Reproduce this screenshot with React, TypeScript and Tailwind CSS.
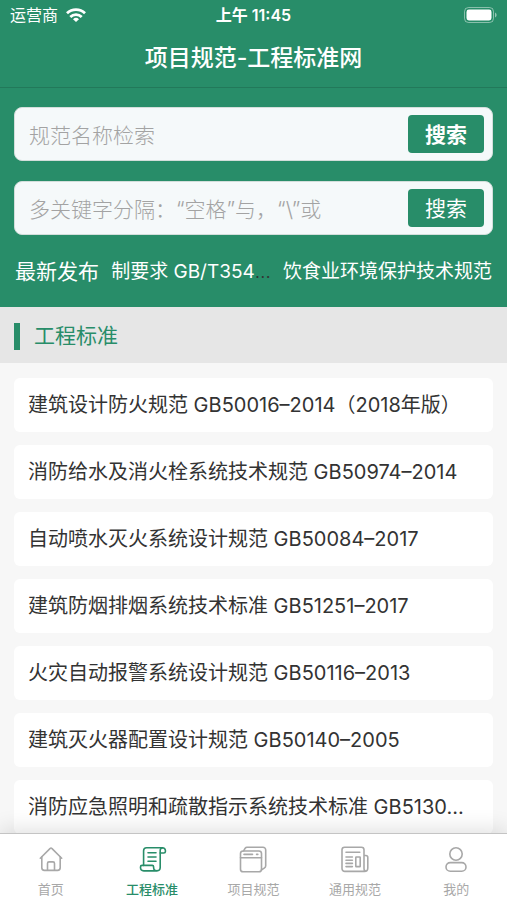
import type { ReactNode } from "react";

const standards = [
  "建筑设计防火规范 GB50016–2014（2018年版）",
  "消防给水及消火栓系统技术规范 GB50974–2014",
  "自动喷水灭火系统设计规范 GB50084–2017",
  "建筑防烟排烟系统技术标准 GB51251–2017",
  "火灾自动报警系统设计规范 GB50116–2013",
  "建筑灭火器配置设计规范 GB50140–2005",
  "消防应急照明和疏散指示系统技术标准 GB5130…",
];

function TabIcon({ children }: { children: ReactNode }) {
  return (
    <svg
      viewBox="0 0 30 30"
      className="size-[30px]"
      fill="none"
      stroke="currentColor"
      strokeWidth="1.6"
      strokeLinecap="round"
      strokeLinejoin="round"
      aria-hidden="true"
    >
      {children}
    </svg>
  );
}

const tabs = [
  {
    label: "首页",
    icon: (
      <TabIcon>
        <path d="M4.3 14.2 14.2 4.4a1.1 1.1 0 0 1 1.6 0l9.9 9.8" />
        <path d="M5.8 12.8v11a2.6 2.6 0 0 0 2.6 2.6h13.200a2.600 2.600 0 0 0 2.600-2.600v-11" />
        <path d="M11.5 26.200v-6.800a1.500 1.500 0 0 1 1.500-1.500h4a1.500 1.500 0 0 1 1.500 1.500v6.800" />
      </TabIcon>
    ),
  },
  {
    label: "工程标准",
    active: true,
    icon: (
      <TabIcon>
        <path d="M25.600 3.800H9.600a3 3 0 0 0-3 3v14.600" />
        <path d="M25.600 3.800a2.800 2.800 0 0 1 2.800 2.800v.8a1.600 1.600 0 0 1-1.600 1.600h-3.600V6.400a2.500 2.500 0 0 1 2.400-2.600" />
        <path d="M23.200 9v14.600a3.300 3.300 0 0 1-6.600 0v-.8a1.400 1.400 0 0 0-1.400-1.400H5a1.500 1.500 0 0 0-1.500 1.500v.7a3.300 3.300 0 0 0 3.300 3.300h13" />
        <path d="M11 8.800h8M11 13h8M11 17.200h8" />
      </TabIcon>
    ),
  },
  {
    label: "项目规范",
    icon: (
      <TabIcon>
        <rect x="2.500" y="7" width="21" height="20.800" rx="2.600" />
        <path d="M2.500 13.800h21" />
        <path d="M6 10.400h8.500M18.600 10.400h1.200" />
        <path d="M5.600 6.800 7.200 4.200a2.200 2.200 0 0 1 1.800-1h16a2.700 2.700 0 0 1 2.700 2.700v15.800a2.800 2.800 0 0 1-1.400 2.400l-2.700 1.600" />
      </TabIcon>
    ),
  },
  {
    label: "通用规范",
    icon: (
      <TabIcon>
        <path d="M24 11.500h1.800a2 2 0 0 1 2 2v10.400A3.500 3.500 0 0 1 24.400 27.400H4.800A2.800 2.800 0 0 1 2 24.600V5.800A2.600 2.600 0 0 1 4.600 3.200h16.800A2.600 2.600 0 0 1 24 5.800V24.500a2.400 2.400 0 0 0 1.400 2.500" />
        <path d="M6 8.200h13.800M6 13h6.400M6 16.200h6.400M6 19.400h6.400M6 22.600h6.400" />
        <rect x="15.800" y="13" width="4.400" height="9.600" rx=".4" />
      </TabIcon>
    ),
  },
  {
    label: "我的",
    icon: (
      <TabIcon>
        <circle cx="15" cy="10" r="6.200" />
        <rect x="5" y="18.600" width="20" height="8.600" rx="4.300" />
      </TabIcon>
    ),
  },
];

function StatusBar() {
  return (
    <div className="grid h-[30px] grid-cols-3 items-center px-[10px] text-base">
      <div className="flex items-center gap-2">
        <span>运营商</span>
        <svg viewBox="0 0 20 14" className="h-[14px] w-5" fill="none" stroke="currentColor" strokeWidth="2.800" aria-hidden="true">
          <path d="M1 5.200a13 13 0 0 1 18 0" />
          <path d="M4.300 9a8.200 8.200 0 0 1 11.400 0" />
          <path d="M10 14 7 11.200a4.500 4.500 0 0 1 6 0Z" fill="currentColor" stroke="none" />
        </svg>
      </div>
      <div className="text-center font-semibold whitespace-nowrap">上午 11:45</div>
      <svg viewBox="0 0 33 16" className="h-4 w-[33px] justify-self-end" aria-hidden="true">
        <rect x=".5" y=".5" width="29" height="15" rx="4" fill="none" stroke="#fff" strokeOpacity=".45" />
        <rect x="2.500" y="2.500" width="25" height="11" rx="2.400" fill="#fff" />
        <path d="M31 5.500v5c1-.4 1.600-1.300 1.600-2.500S32 5.900 31 5.500Z" fill="#fff" fillOpacity=".5" />
      </svg>
    </div>
  );
}

function SearchBox({ placeholder, bold = false }: { placeholder: string; bold?: boolean }) {
  return (
    <form
      className="flex h-[54px] items-center rounded-lg border border-[#d3dedb] bg-[#f5f9fa] pr-2 pl-[14px]"
      onSubmit={(e) => e.preventDefault()}
    >
      <input
        type="text"
        aria-label={placeholder}
        placeholder={placeholder}
        className="min-w-0 flex-1 bg-transparent pt-1 text-[21px] font-light text-[#333] outline-none placeholder:text-[#a3a3a3]"
      />
      <button
        type="submit"
        className={`h-[38px] w-[76px] shrink-0 rounded bg-[#288d69] pt-[2px] text-[21px] text-white ${bold ? "font-bold" : "font-normal"}`}
      >
        搜索
      </button>
    </form>
  );
}

export default function App() {
  return (
    <div className="flex h-screen flex-col overflow-hidden bg-[#f7f7f7] font-[Inter,'Noto_Sans_CJK_SC',sans-serif] text-[#333]">
      <header className="shrink-0 bg-[#288d69] text-white">
        <StatusBar />
        <h1 className="flex h-[58px] items-center justify-center border-b border-[#22795a] text-[23px] font-medium">
          项目规范-工程标准网
        </h1>
        <div className="flex flex-col gap-5 px-[14px] pt-[19px]">
          <SearchBox placeholder="规范名称检索" bold />
          <SearchBox placeholder="多关键字分隔：“空格”与，“\”或" />
        </div>
        <div className="flex h-[72px] items-center justify-between px-[15px] pt-[2px] text-[19px] whitespace-nowrap">
          <span className="text-[21px]">最新发布</span>
          <span className="font-light text-[#333]">
            <a href="#latest" className="font-normal text-white">制要求 GB/T354</a>…
          </span>
          <a href="#food">饮食业环境保护技术规范</a>
        </div>
      </header>

      <h2 className="flex h-14 shrink-0 items-center gap-[14px] bg-[#e6e6e6] px-[14px] pt-[2px] text-[21px] text-[#288d69]">
        <span className="h-[27px] w-[6px] bg-[#288d69]" />
        工程标准
      </h2>

      <main className="min-h-0 flex-1 overflow-hidden">
        <ul className="flex flex-col gap-[13px] px-[14px] pt-[15px]">
          {standards.map((name) => (
            <li key={name}>
              <a href="#detail" className="block truncate rounded-md bg-white px-[14px] text-[20px] leading-[54px]">
                {name}
              </a>
            </li>
          ))}
        </ul>
      </main>

      <nav className="relative grid h-[67px] shrink-0 grid-cols-5 border-t border-[#c4c4c4] bg-white shadow-[0_-4px_20px_rgba(0,0,0,0.12)]">
        {tabs.map((tab) => (
          <a
            key={tab.label}
            href="#tab"
            className={`flex flex-col items-center gap-[5px] pt-[10px] text-[13px] leading-5 ${tab.active ? "font-medium text-[#288d69]" : "text-[#a8a8a8]"}`}
          >
            {tab.icon}
            {tab.label}
          </a>
        ))}
      </nav>
    </div>
  );
}
